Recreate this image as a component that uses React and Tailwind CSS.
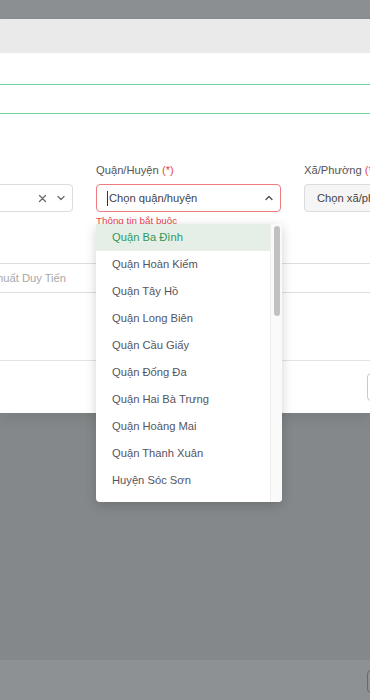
import React from "react";

const items = [
  "Quận Ba Đình",
  "Quận Hoàn Kiếm",
  "Quận Tây Hồ",
  "Quận Long Biên",
  "Quận Cầu Giấy",
  "Quận Đống Đa",
  "Quận Hai Bà Trưng",
  "Quận Hoàng Mai",
  "Quận Thanh Xuân",
  "Huyện Sóc Sơn",
];

function ChevronDown() {
  return (
    <svg width="10" height="10" viewBox="0 0 10 10" fill="none" stroke="#6b6b6b" strokeWidth="1.3" strokeLinecap="round" strokeLinejoin="round">
      <path d="M2 3.5 L5 6.5 L8 3.5" />
    </svg>
  );
}
function ChevronUp() {
  return (
    <svg width="10" height="10" viewBox="0 0 10 10" fill="none" stroke="#4b4b4b" strokeWidth="1.3" strokeLinecap="round" strokeLinejoin="round">
      <path d="M2 6.5 L5 3.5 L8 6.5" />
    </svg>
  );
}
function Cross() {
  return (
    <svg width="9" height="9" viewBox="0 0 9 9" fill="none" stroke="#6b6b6b" strokeWidth="1.3" strokeLinecap="round">
      <path d="M1.5 1.5 L7.5 7.5 M7.5 1.5 L1.5 7.5" />
    </svg>
  );
}

export default function App() {
  return (
    <div className="relative w-[370px] h-[700px] overflow-hidden bg-[#85888a] font-['Liberation_Sans',Arial,sans-serif] flex flex-col">
      <div className="h-[19px] shrink-0 bg-[#8b8f92]" />
      {/* modal */}
      <div className="h-[394px] shrink-0 bg-white flex flex-col shadow-[0_6px_12px_rgba(0,0,0,0.08)]">
        <div className="h-[34px] shrink-0 bg-[#eaeaea]" />
        <div className="mt-[31px] h-[30px] border-y border-[#6fd79b]" />
        {/* selects row */}
        <div className="mt-[49px] flex">
          <div className="-ml-[10px] w-[83px] shrink-0 flex flex-col">
            <div className="h-[14px]" />
            <div className="mt-[7px] h-[28px] border border-[#dcdcdc] rounded-[4px] flex items-center justify-end gap-[9px] pr-[6px]">
              <Cross />
              <ChevronDown />
            </div>
          </div>
          <div className="ml-[23px] w-[185px] shrink-0 flex flex-col">
            <div className="h-[14px] text-[11.2px] leading-[14px] text-[#555]">
              Quận/Huyện <span className="text-[#e5484d]">(*)</span>
            </div>
            <div className="mt-[7px] h-[28px] border border-[#ef7d80] rounded-[4px] flex items-center pl-[10px] pr-[6px]">
              <span className="w-px h-[15px] bg-[#333] mr-[1px]" />
              <span className="text-[11.2px] text-[#444] flex-1">Chọn quận/huyện</span>
              <ChevronUp />
            </div>
            <div className="mt-[3px] text-[9.8px] leading-[12px] text-[#e5484d]">Thông tin bắt buộc</div>
          </div>
          <div className="ml-[23px] w-[120px] shrink-0 flex flex-col">
            <div className="h-[14px] text-[11.2px] leading-[14px] text-[#555] whitespace-nowrap">
              Xã/Phường <span className="text-[#e5484d]">(*)</span>
            </div>
            <div className="mt-[7px] h-[28px] border border-[#dcdcdc] bg-[#f5f5f5] rounded-[4px] flex items-center pl-[12px]">
              <span className="text-[11.2px] text-[#444] whitespace-nowrap">Chọn xã/phường</span>
            </div>
          </div>
        </div>
        <div className="mt-[36px] h-[30px] border-y border-[#dedede] flex items-center">
          <span className="-ml-[3px] text-[11.2px] text-[#a8a8a8] whitespace-nowrap">huất Duy Tiến</span>
        </div>
        <div className="mt-[67px] border-t border-[#e3e3e3] flex justify-end pt-[12px]">
          <div className="-mr-[20px] w-[23px] h-[28px] border border-[#c9c9c9] rounded-[4px]" />
        </div>
      </div>
      <div className="flex-1" />
      <div className="h-[40px] shrink-0 bg-[#8e9193] flex justify-end pt-[10px]">
        <div className="-mr-[20px] w-[23px] h-[23px] border border-[#8a5960] rounded-[4px]" />
      </div>

      {/* dropdown */}
      <div className="absolute left-[96px] top-[224px] w-[186px] h-[278px] bg-white rounded-b-[4px] shadow-[0_3px_12px_rgba(0,0,0,0.18)] flex overflow-hidden">
        <div className="w-[174px] flex flex-col">
          {items.map((t, i) => (
            <div
              key={t}
              className={
                i === 0
                  ? "h-[27px] shrink-0 flex items-center pl-[16px] text-[11.2px] bg-[#e5efe8] text-[#2f9a58]"
                  : "h-[27px] shrink-0 flex items-center pl-[16px] text-[11.2px] text-[#55555f]"
              }
            >
              {t}
            </div>
          ))}
        </div>
        <div className="w-[12px] bg-[#fafafa] border-l border-[#eeeeee] flex justify-center pt-[2px]">
          <div className="w-[6px] h-[90px] rounded-full bg-[#c1c1c1]" />
        </div>
      </div>
    </div>
  );
}
